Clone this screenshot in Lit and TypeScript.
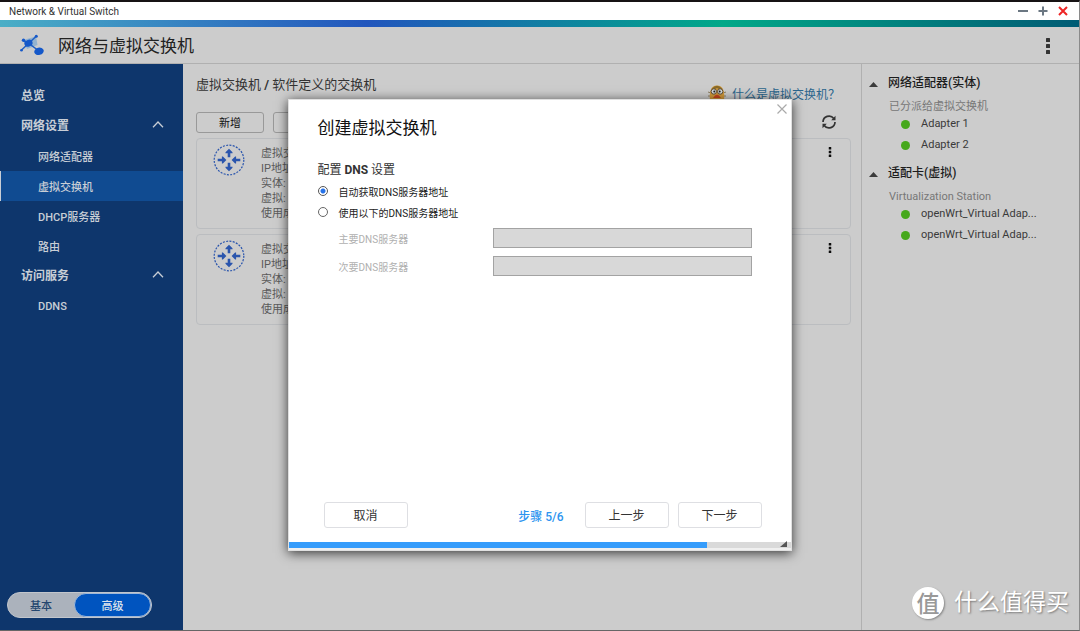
import { LitElement, html, css, svg } from "lit";
import { customElement, state, property } from "lit/decorators.js";
import { classMap } from "lit/directives/class-map.js";

const controls = css`
  * { box-sizing: border-box; }
  button { font: inherit; color: inherit; background: none; border: 0; padding: 0; margin: 0; cursor: pointer; }
  svg { display: block; }
  h1, h2, h3, p, ul { margin: 0; padding: 0; font-weight: 400; list-style: none; }
  a { color: inherit; text-decoration: none; }
`;

const dots = (cls: string) => html`<svg class=${cls} width="4" height="16" viewBox="0 0 4 16" fill="currentColor" aria-hidden="true">
  <rect width="4" height="4" y="0" rx=".5"/><rect width="4" height="4" y="6" rx=".5"/><rect width="4" height="4" y="12" rx=".5"/></svg>`;

const outArrow = (turn: number) => svg`<path transform="rotate(${turn} 16 16)" d="M16 4.700l3.500 3.600v1h-2.200v3.900h-2.600V9.300h-2.200v-1z"/>`;
const inArrow = (turn: number) => svg`<path transform="rotate(${turn} 16 16)" d="M4.700 14.800h4.200v-2.300h1L13.400 16l-3.500 3.500h-1v-2.300H4.700z"/>`;

@customElement("switch-card")
class SwitchCard extends LitElement {
  static styles = [controls, css`
    :host { display: flex; height: 91px; border: 1px solid #bbbdc0; border-radius: 4px; padding: 6px 18px 0 16px; }
    .icon { color: #2a55ad; flex: none; margin-top: -1px; }
    ul { flex: 1; margin: 1px 0 0 16px; font-size: 11px; line-height: 15px; color: #5a5a5a; white-space: nowrap; overflow: hidden; }
    .more { width: 4px; height: 14px; color: #0c0c0c; }
    .dots { height: 10px; }
  `];
  render() {
    return html`
      <svg class="icon" width="32" height="32" viewBox="0 0 32 32" fill="currentColor" aria-hidden="true">
        <circle cx="16" cy="16" r="14.800" fill="none" stroke="currentColor" stroke-width="1.200" stroke-dasharray="2 1.321"/>
        ${outArrow(0)}${outArrow(180)}${inArrow(0)}${inArrow(180)}
      </svg>
      <ul><li>虚拟交换机</li><li>IP地址:</li><li>实体:</li><li>虚拟:</li><li>使用成员:</li></ul>
      <button class="more" aria-label="更多">${dots("dots")}</button>`;
  }
}

@customElement("adapter-group")
class AdapterGroup extends LitElement {
  @property() heading = "";
  @property() caption = "";
  @property({ type: Array }) items: string[] = [];
  static styles = [controls, css`
    :host { display: block; }
    h2 { display: flex; align-items: center; font-size: 12px; font-weight: 500; line-height: 20px; color: #1c1c1c; }
    h2 svg { flex: none; margin: 3px 10px 0 0; }
    p { margin: 6px 0 0 20px; font-size: 11px; line-height: 16px; color: #777; }
    li { display: flex; align-items: center; height: 21px; margin-left: 32px; font-size: 11px; color: #3a3a3a; }
    ul { margin-top: -2px; }
    i { width: 9px; height: 9px; border-radius: 50%; background: #46a81c; margin: 2px 11px 0 0; }
  `];
  render() {
    return html`
      <h2><svg width="9" height="5" viewBox="0 0 9 5" aria-hidden="true"><path d="M4.500 0L9 5H0z" fill="#3a3a3a"/></svg>${this.heading}</h2>
      <p>${this.caption}</p>
      <ul>${this.items.map((t) => html`<li><i></i>${t}</li>`)}</ul>`;
  }
}

@customElement("dns-dialog")
class DnsDialog extends LitElement {
  @state() manual = false;
  static styles = [controls, css`
    :host { display: flex; flex-direction: column; background: #fff; border: 1px solid #e0e0e0; box-shadow: 0 2px 11px rgba(0, 0, 0, .75); color: #333; }
    .close { position: absolute; right: 3px; top: 3px; padding: 1px; color: #aaa; }
    .body { flex: 1; padding: 16px 39px 0 29px; }
    h2 { font-size: 17px; line-height: 24px; color: #111; }
    h3 { font-size: 12px; line-height: 20px; margin: 20px 0 1px; color: #333; }
    .choice { display: flex; align-items: center; height: 21px; font-size: 10px; color: #222; }
    input[type="radio"] { appearance: none; width: 10px; height: 10px; margin: 0 11px 1px 0; border: 1px solid #666; border-radius: 50%; }
    input[type="radio"]:checked { border-color: #555; background: radial-gradient(#2672e8 0 2px, #fff 3px); }
    .field { display: grid; grid-template-columns: 154px 1fr; align-items: center; height: 28px; margin-left: 21px; font-size: 10px; color: #b0b0b0; }
    .first { margin-top: 1px; }
    input[type="text"] { width: 100%; height: 20px; border: 1px solid #a3a3a3; background: #fff; padding: 0 4px; }
    input[type="text"]:disabled { background: #d8d8d8; }
    .footer { display: flex; align-items: center; padding: 0 29px 0 35px; margin-bottom: 14px; font-size: 12px; }
    .footer button { width: 84px; height: 26px; border: 1px solid #dedfe3; border-radius: 3px; background: #fff; padding-bottom: 1px; }
    .step { margin-left: auto; margin-right: 21px; font-weight: 500; color: #2c94ef; }
    .footer .next { margin-left: 9px; }
    .track { height: 8px; background: #d9d9d9; border-bottom: 2px solid #efefef; position: relative; }
    .fill { height: 100%; background: #359cfb; }
    .grip { position: absolute; right: 4px; top: -1px; }
  `];
  render() {
    return html`
      <button class="close" aria-label="关闭"><svg width="10" height="10" viewBox="0 0 10 10" fill="none" stroke="currentColor" stroke-width="1.200"><path d="M.5.5l9 9M9.500.5l-9 9"/></svg></button>
      <div class="body">
        <h2>创建虚拟交换机</h2>
        <h3>配置 <b>DNS</b> 设置</h3>
        <label class="choice"><input type="radio" name="dns" .checked=${!this.manual} @change=${() => (this.manual = false)}>自动获取DNS服务器地址</label>
        <label class="choice"><input type="radio" name="dns" .checked=${this.manual} @change=${() => (this.manual = true)}>使用以下的DNS服务器地址</label>
        <label class="field first">主要DNS服务器<input type="text" ?disabled=${!this.manual}></label>
        <label class="field">次要DNS服务器<input type="text" ?disabled=${!this.manual}></label>
      </div>
      <div class="footer">
        <button>取消</button><span class="step">步骤 5/6</span><button>上一步</button><button class="next">下一步</button>
      </div>
      <div class="track"><div class="fill" style="width:${(5 / 6) * 100}%"></div>
        <svg class="grip" width="7" height="6" viewBox="0 0 7 6" aria-hidden="true"><path d="M7 0v6H0z" fill="#555"/></svg></div>`;
  }
}

const nav = [
  { label: "总览", children: null },
  { label: "网络设置", children: ["网络适配器", "虚拟交换机", "DHCP服务器", "路由"] },
  { label: "访问服务", children: ["DDNS"] },
];

@customElement("app-root")
class AppRoot extends LitElement {
  @state() current = "虚拟交换机";
  @state() advanced = true;
  static styles = [controls, css`
    :host { display: flex; flex-direction: column; height: 100vh; min-height: 560px; position: relative; overflow: hidden; box-sizing: border-box;
      font-family: Roboto, "Noto Sans CJK SC", sans-serif; font-size: 12px; background: #ccc;
      border-top: 2px solid #171314; border-bottom: 1px solid #666; border-right: 1px solid #8a8a8a; color: #333; }
    .titlebar { display: flex; align-items: center; height: 18px; flex: none; background: #fff; padding: 0 11px 0 9px; font-size: 10px; color: #333; }
    .window { margin-left: auto; display: flex; gap: 10px; color: #6b7782; }
    .shut { color: #ee2525; }
    .stripe { height: 7px; flex: none; background: linear-gradient(90deg, #4aaec6, #2256bd 34%, #00a888 67%, #005b74); }
    .header { display: flex; align-items: center; height: 37px; flex: none; border-bottom: 1px solid #b0b0b0; padding: 0 29px 0 19px; }
    .header h1 { font-size: 17px; color: #222; margin: 0 0 2px 13px; }
    .menu { margin: 2px 0 0 auto; color: #333; }
    .columns { display: grid; grid-template-columns: 183px 1fr 218px; flex: 1; min-height: 0; }
    .sidebar { background: #0e366c; color: #c8ced6; display: flex; flex-direction: column; padding-top: 17px; font-weight: 700; }
    .sidebar button { display: flex; width: 100%; align-items: center; text-align: left; height: 30px; padding: 0 19px 3px 21px; font-size: 12px; }
    .sidebar .sub { padding: 0 0 0 37px; font-size: 11px; font-weight: 500; border-left: 1px solid transparent; }
    .sidebar .active { background: #104b91; border-left-color: #c8ced6; }
    .chevron { margin-left: auto; }
    .mode { margin: auto 31px 12px 7px; display: flex; flex: none; height: 26px; border-radius: 13px; background: #abb2bc; border: 1px solid #c2c6cc; }
    .sidebar .mode button { flex: 1; justify-content: center; height: 24px; padding: 0 0 1px; font-size: 11px; font-weight: 500; color: #24466f; border-radius: 12px; }
    .sidebar .mode .on { flex: 0 0 77px; background: #0054bf; color: #dce3ec; border: 1px solid #9fb8d8; }
    .main { padding: 10px 10px 0 13px; min-width: 0; }
    .crumb { font-size: 13px; line-height: 22px; color: #333; }
    .help { display: flex; justify-content: flex-end; align-items: center; gap: 6px; height: 16px; margin: -11px 11px 0 0; color: #2b668d; font-size: 12px; }
    .tools { display: flex; gap: 9px; align-items: center; height: 22px; margin: 10px 15px 5px 0; }
    .tools .btn { width: 68px; height: 21px; border: 1px solid #999; border-radius: 3px; font-size: 11px; color: #111; }
    .refresh { margin-left: auto; color: #333; }
    switch-card + switch-card { margin-top: 5px; }
    .side { border-left: 1px solid #b0b0b0; padding: 9px 8px 0 7px; }
    adapter-group + adapter-group { margin-top: 8px; }
    .backdrop { position: absolute; inset: 0; display: flex; justify-content: center; align-items: flex-start; padding-top: 97px; pointer-events: none; }
    dns-dialog { position: relative; width: 504px; height: 452px; pointer-events: auto; }
    .brand { position: absolute; right: 10px; bottom: 9px; display: flex; align-items: center; gap: 10px; color: #fff; font-size: 23px; line-height: 36px; text-shadow: 1px 1px 2px #777; }
    .seal { width: 32px; height: 32px; border-radius: 50%; background: #fff; color: #999; display: grid; place-items: center; box-shadow: 1px 1px 2px #888; text-shadow: none; font-weight: 500; }
  `];
  render() {
    const chevron = html`<svg class="chevron" width="12" height="7" viewBox="0 0 12 7" fill="none" stroke="currentColor" stroke-width="1.300" aria-hidden="true"><path d="M1 6.200L6 1l5 5.200"/></svg>`;
    return html`
      <div class="titlebar"><span>Network &amp; Virtual Switch</span>
        <div class="window">
          <button aria-label="最小化"><svg width="10" height="10" viewBox="0 0 10 10"><path d="M0 5h10" stroke="currentColor" stroke-width="2"/></svg></button>
          <button aria-label="最大化"><svg width="10" height="10" viewBox="0 0 10 10"><path d="M.5 5h9M5 .5v9" stroke="currentColor" stroke-width="2"/></svg></button>
          <button class="shut" aria-label="关闭"><svg width="10" height="10" viewBox="0 0 10 10"><path d="M1 1l8 8M9 1L1 9" stroke="currentColor" stroke-width="2"/></svg></button>
        </div></div>
      <div class="stripe"></div>
      <header class="header">
        <svg width="26" height="22" viewBox="0 0 26 22" aria-hidden="true">
          <path d="M4 6L17 2.500 18.500 11 8 15z" fill="#93b3d0"/>
          <path d="M2 16.500L17.500 2M4.500 6.500L9 9l11 8" stroke="#1f5fc4" stroke-width="1.500" fill="none"/>
          <ellipse cx="9.500" cy="9.200" rx="4.200" ry="3.300" transform="rotate(-25 9.500 9.200)" fill="#1558c9"/>
          <ellipse cx="20" cy="17.300" rx="4.800" ry="3.700" transform="rotate(-15 20 17.300)" fill="#1558c9"/>
          <circle cx="4.500" cy="6.300" r="1.700" fill="#1558c9"/><circle cx="17.300" cy="2.200" r="1.500" fill="#1558c9"/><circle cx="2.500" cy="16.300" r="1.300" fill="#1558c9"/>
        </svg>
        <h1>网络与虚拟交换机</h1>
        <button class="menu" aria-label="菜单">${dots("")}</button>
      </header>
      <div class="columns">
        <nav class="sidebar">
          ${nav.map((g) => html`<button>${g.label}${g.children ? chevron : ""}</button>
            ${(g.children ?? []).map((c) => html`<button class=${classMap({ sub: true, active: c === this.current })} @click=${() => (this.current = c)}>${c}</button>`)}`)}
          <div class="mode">
            <button class=${classMap({ on: !this.advanced })} @click=${() => (this.advanced = false)}>基本</button>
            <button class=${classMap({ on: this.advanced })} @click=${() => (this.advanced = true)}>高级</button>
          </div>
        </nav>
        <main class="main">
          <div class="crumb">虚拟交换机 <b>/</b> 软件定义的交换机</div>
          <a class="help" href="#help">
            <svg width="18" height="16" viewBox="0 0 18 16" aria-hidden="true">
              <path d="M0 7l3 1M15 8l3-1M0 11h3M15 11h3" stroke="#8d8064"/>
              <path d="M2 16C1 6 3 .5 9 .5S17 6 16 16z" fill="#d39a3a"/><path d="M3.500 4Q9-2.500 14.500 4L12 4.500 9 3 6 4.500z" fill="#8a6a28"/>
              <circle cx="5.800" cy="6.500" r="2.700" fill="#cfd5d8" stroke="#604d30"/><circle cx="12.200" cy="6.500" r="2.700" fill="#cfd5d8" stroke="#604d30"/>
              <circle cx="6.300" cy="6.500" r="1" fill="#222"/><circle cx="11.700" cy="6.500" r="1" fill="#222"/>
              <path d="M5 13Q9 6 13 13z" fill="#c8441c"/>
            </svg>什么是虚拟交换机？</a>
          <div class="tools"><button class="btn">新增</button><button class="btn">管理</button>
            <button class="refresh" aria-label="刷新"><svg width="14" height="14" viewBox="0 0 14 14" fill="none" stroke="currentColor" stroke-width="1.700"><path d="M1 7a6 6 0 0 1 10.800-3.500M13 7a6 6 0 0 1-10.800 3.500"/><path d="M13.500.8v4.400H9.200zM.5 13.200V8.800h4.300z" fill="currentColor" stroke="none"/></svg></button></div>
          <switch-card></switch-card><switch-card></switch-card>
        </main>
        <aside class="side">
          <adapter-group heading="网络适配器(实体)" caption="已分派给虚拟交换机" .items=${["Adapter 1", "Adapter 2"]}></adapter-group>
          <adapter-group heading="适配卡(虚拟)" caption="Virtualization Station" .items=${["openWrt_Virtual Adap...", "openWrt_Virtual Adap..."]}></adapter-group>
        </aside>
      </div>
      <div class="backdrop"><dns-dialog role="dialog" aria-label="创建虚拟交换机"></dns-dialog></div>
      <div class="brand"><span class="seal">值</span>什么值得买</div>`;
  }
}
